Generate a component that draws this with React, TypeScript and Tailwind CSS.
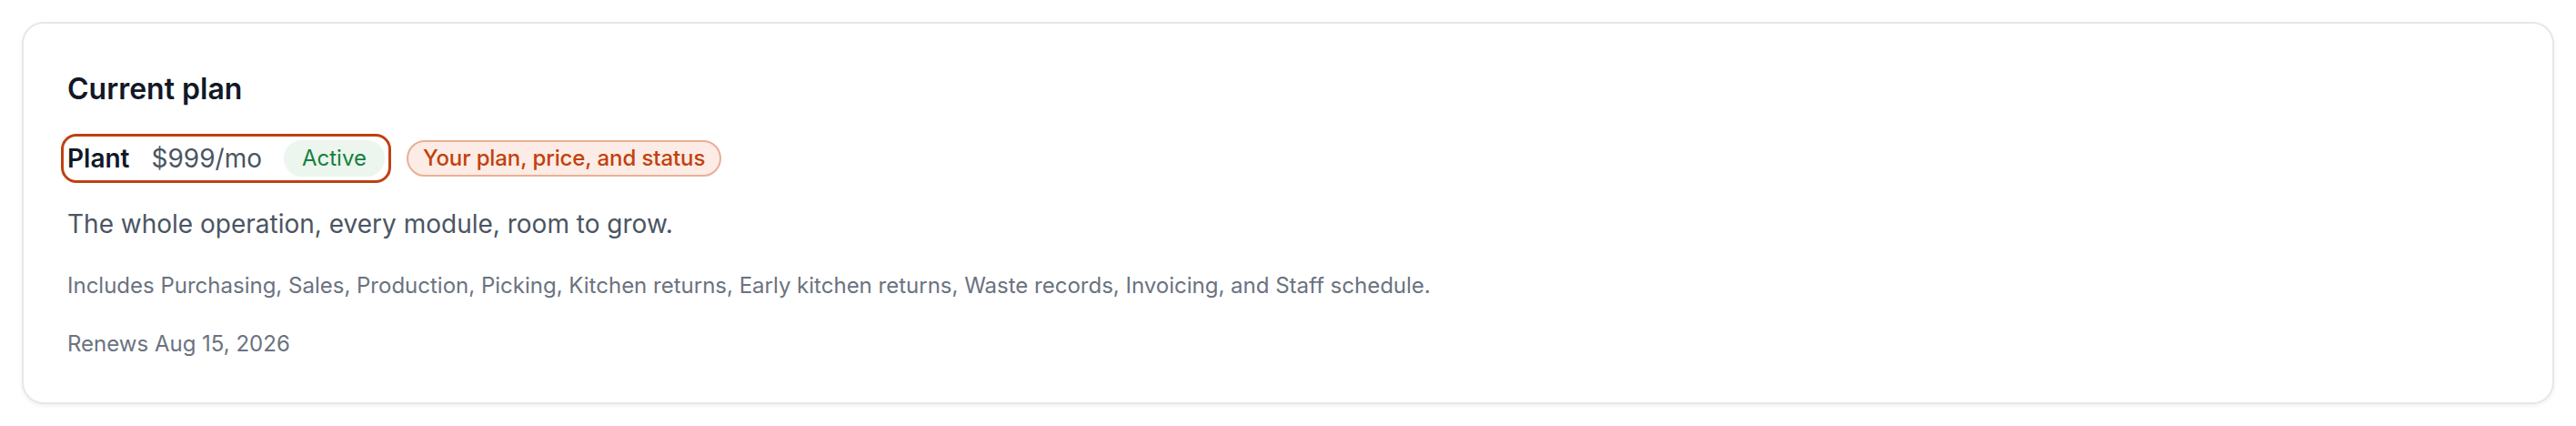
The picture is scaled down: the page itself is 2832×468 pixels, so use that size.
export default function App() {
  const modules = [
    "Purchasing",
    "Sales",
    "Production",
    "Picking",
    "Kitchen returns",
    "Early kitchen returns",
    "Waste records",
    "Invoicing",
  ];

  return (
    <div
      className="min-h-screen bg-white p-6"
      style={{ fontFamily: "Inter, 'Noto Sans', sans-serif" }}
    >
      {/* PLAN CARD */}
      <section className="rounded-[24px] border-2 border-[#e5e7eb] bg-white p-12 shadow-[0_2px_4px_rgba(0,0,0,0.06)]">
        <h2 className="mb-8 text-[32px] font-semibold leading-[48px] text-[#111827]">
          Current plan
        </h2>

        <div className="flex items-center gap-6">
          {/* highlighted target */}
          <div className="flex items-center gap-6 rounded-[10px] outline-[3px] outline-offset-[4px] outline-[#bf4210] outline-solid">
            <span className="text-[28px] font-semibold leading-[40px] text-[#111827]">
              Plant
            </span>
            <span className="text-[28px] leading-[40px] text-[#4b5563]">
              $999/mo
            </span>
            <span className="rounded-full bg-[#ecf5ee] px-5 py-1 text-[24px] leading-[32px] text-[#15803d]">
              Active
            </span>
          </div>

          <span className="rounded-full border-2 border-[#eaae96] bg-[#fcece5] px-4 py-[2px] text-[24px] font-medium leading-[32px] tracking-[-0.1px] text-[#c2410c]">
            Your plan, price, and status
          </span>
        </div>

        <p className="mt-8 text-[28px] leading-[40px] text-[#4b5563]">
          The whole operation, every module, room to grow.
        </p>

        <p className="mt-8 text-[24px] leading-[32px] text-[#6b7280]">
          Includes {modules.join(", ")}, and Staff schedule.
        </p>

        <p className="mt-8 text-[24px] leading-[32px] text-[#6b7280]">
          Renews Aug 15, 2026
        </p>
      </section>
    </div>
  );
}
